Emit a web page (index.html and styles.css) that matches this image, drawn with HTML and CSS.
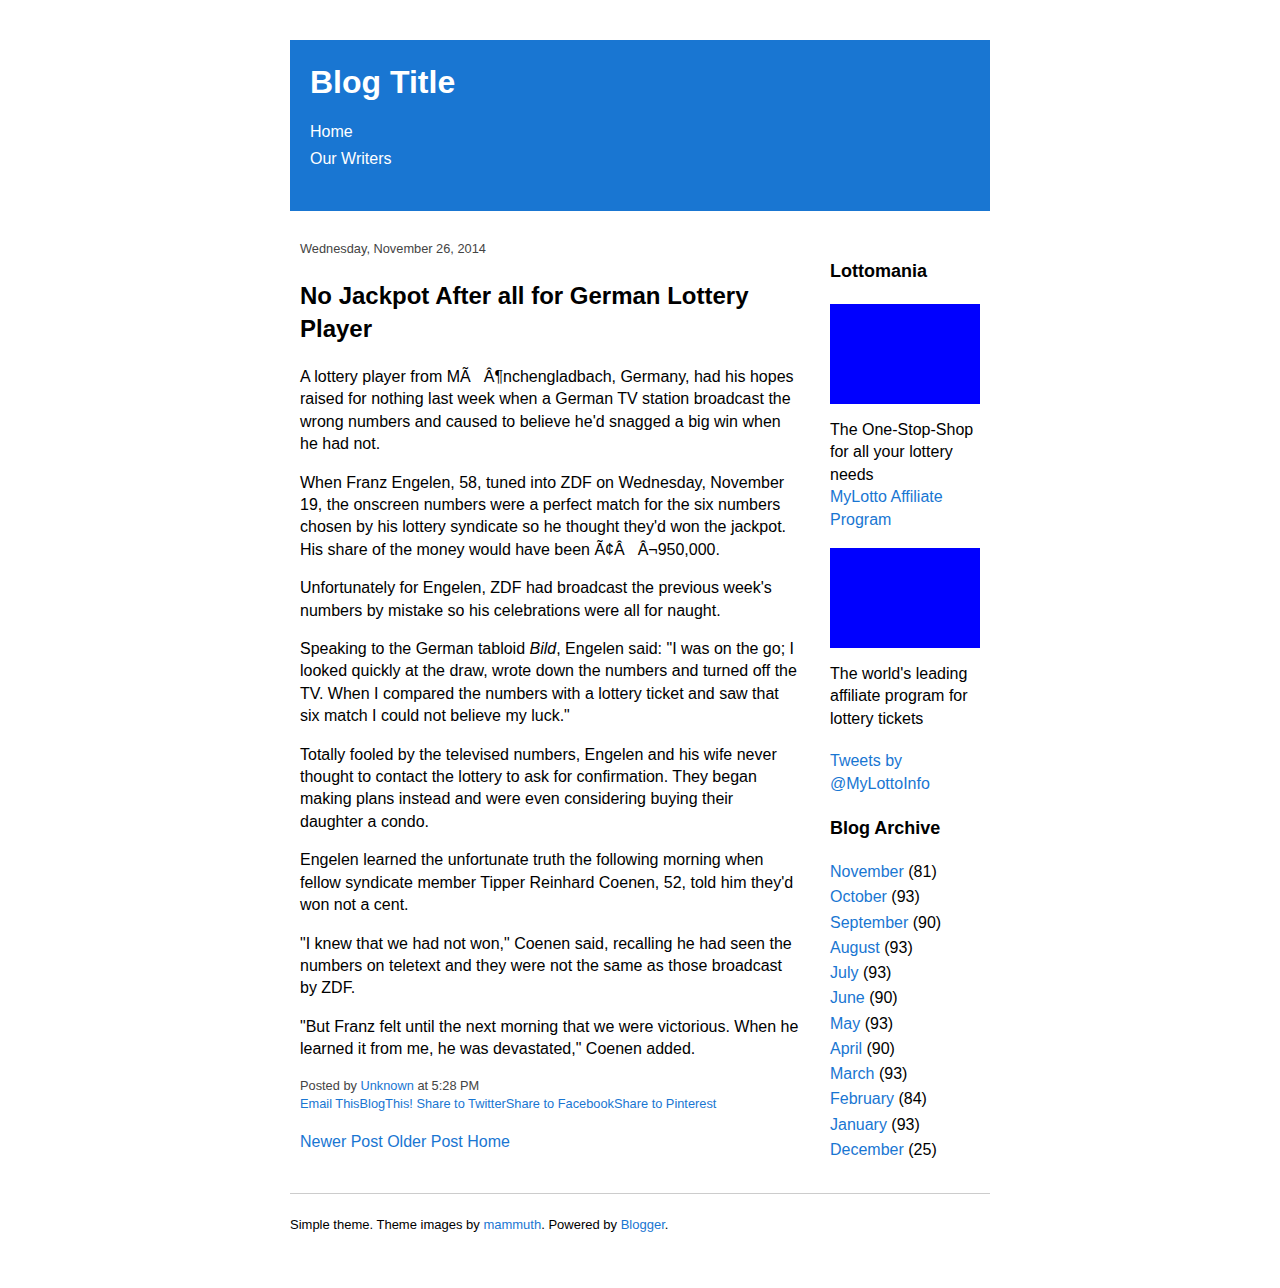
FILE: index.html
```html
<!DOCTYPE html>
<html lang="en">
<head>
<meta charset="utf-8">
<title>Blog Title: No Jackpot After all for German Lottery Player</title>
<link rel="stylesheet" href="styles.css">
</head>
<body>
<div class="page">
  <header class="header">
    <h1 class="blog-title">Blog Title</h1>
    <ul class="nav">
      <li><a href="#">Home</a></li>
      <li><a href="#">Our Writers</a></li>
    </ul>
  </header>

  <div class="content">
    <main class="main">
      <div class="date">Wednesday, November 26, 2014</div>
      <h2 class="post-title">No Jackpot After all for German Lottery Player</h2>
      <div class="post-body">
        <p>A lottery player from <span class="nowrap">MÃ<span class="ctl"></span>Â¶nchengladbach,</span> Germany, had his hopes raised for nothing last week when a German TV station broadcast the wrong numbers and caused to believe he'd snagged a big win when he had not.</p>
        <p>When Franz Engelen, 58, tuned into ZDF on Wednesday, November 19, the onscreen numbers were a perfect match for the six numbers chosen by his lottery syndicate so he thought they'd won the jackpot. His share of the money would have been <span class="nowrap">Ã¢Â<span class="ctl"></span>Â¬950,000.</span></p>
        <p>Unfortunately for Engelen, ZDF had broadcast the previous week's numbers by mistake so his celebrations were all for naught.</p>
        <p>Speaking to the German tabloid <em>Bild</em>, Engelen said: "I was on the go; I looked quickly at the draw, wrote down the numbers and turned off the TV. When I compared the numbers with a lottery ticket and saw that six match I could not believe my luck."</p>
        <p>Totally fooled by the televised numbers, Engelen and his wife never thought to contact the lottery to ask for confirmation. They began making plans instead and were even considering buying their daughter a condo.</p>
        <p>Engelen learned the unfortunate truth the following morning when fellow syndicate member Tipper Reinhard Coenen, 52, told him they'd won not a cent.</p>
        <p>"I knew that we had not won," Coenen said, recalling he had seen the numbers on teletext and they were not the same as those broadcast by ZDF.</p>
        <p>"But Franz felt until the next morning that we were victorious. When he learned it from me, he was devastated," Coenen added.</p>
      </div>
      <div class="post-footer">
        <div>Posted by <a href="#">Unknown</a> at 5:28 PM</div>
        <div><a href="#">Email This</a><a href="#">BlogThis!</a> <a href="#">Share to Twitter</a><a href="#">Share to Facebook</a><a href="#">Share to Pinterest</a></div>
      </div>
      <div class="pager"><a href="#">Newer Post</a> <a href="#">Older Post</a> <a href="#">Home</a></div>
    </main>

    <aside class="sidebar">
      <h3 class="side-title">Lottomania</h3>
      <div class="ad"></div>
      <div class="desc">The One-Stop-Shop for all your lottery needs</div>
      <div class="desc"><a href="#">MyLotto Affiliate Program</a></div>
      <div class="ad ad-second"></div>
      <div class="desc">The world's leading affiliate program for lottery tickets</div>
      <div class="desc tweets"><a href="#">Tweets by @MyLottoInfo</a></div>
      <h3 class="side-title archive-title">Blog Archive</h3>
      <ul class="archive">
        <li><a href="#">November</a> (81)</li>
        <li><a href="#">October</a> (93)</li>
        <li><a href="#">September</a> (90)</li>
        <li><a href="#">August</a> (93)</li>
        <li><a href="#">July</a> (93)</li>
        <li><a href="#">June</a> (90)</li>
        <li><a href="#">May</a> (93)</li>
        <li><a href="#">April</a> (90)</li>
        <li><a href="#">March</a> (93)</li>
        <li><a href="#">February</a> (84)</li>
        <li><a href="#">January</a> (93)</li>
        <li><a href="#">December</a> (25)</li>
      </ul>
    </aside>
  </div>

  <footer class="footer">Simple theme. Theme images by <a href="#">mammuth</a>. Powered by <a href="#">Blogger</a>.</footer>
</div>
</body>
</html>
```

FILE: styles.css
```css
html, body {
  margin: 0;
  padding: 0;
  background: #ffffff;
}

body {
  font-family: "Liberation Sans", Arial, Helvetica, sans-serif;
  color: #000000;
  font-size: 16px;
}

a {
  color: #1976d2;
  text-decoration: none;
}

.page {
  width: 700px;
  margin: 40px auto 0;
}

.header {
  background: #1976d2;
  padding: 24px 20px 39px;
}

.blog-title {
  margin: 0;
  font-size: 32px;
  line-height: 37px;
  font-weight: bold;
  color: #ffffff;
}

.nav {
  list-style: none;
  margin: 17px 0 0;
  padding: 0;
}

.nav li {
  font-size: 16px;
  line-height: 27px;
}

.nav a {
  color: #ffffff;
}

.content {
  display: flex;
  gap: 30px;
  padding: 30px 10px 31px;
}

.main {
  width: 500px;
  flex: none;
}

.sidebar {
  width: 150px;
  flex: none;
}

.date {
  font-size: 12.8px;
  line-height: 16.8px;
  color: #444444;
  margin-bottom: 21px;
}

.post-title {
  margin: 0 0 20px;
  font-size: 24px;
  line-height: 33.6px;
  font-weight: bold;
}

.post-body p {
  margin: 0 0 16px;
  line-height: 22.4px;
}

.nowrap {
  white-space: nowrap;
}

.ctl {
  display: inline-block;
  width: 13px;
}

.post-footer {
  font-size: 12.8px;
  line-height: 18px;
  color: #444444;
}

.pager {
  margin-top: 18px;
  line-height: 22.4px;
}

.side-title {
  margin: 20px 0 22px;
  font-size: 18px;
  line-height: 21px;
  font-weight: bold;
}

.ad {
  width: 150px;
  height: 100px;
  background: #0000ff;
  margin-bottom: 15px;
}

.ad-second {
  margin-top: 17px;
}

.desc {
  line-height: 22.4px;
}

.tweets {
  margin-top: 20px;
}

.archive-title {
  margin: 23px 0 20px;
}

.archive {
  list-style: none;
  margin: 0;
  padding: 0;
}

.archive li {
  line-height: 25.25px;
}

.footer {
  border-top: 1px solid #cccccc;
  padding-top: 22px;
  font-size: 13px;
  line-height: 18px;
}
```
